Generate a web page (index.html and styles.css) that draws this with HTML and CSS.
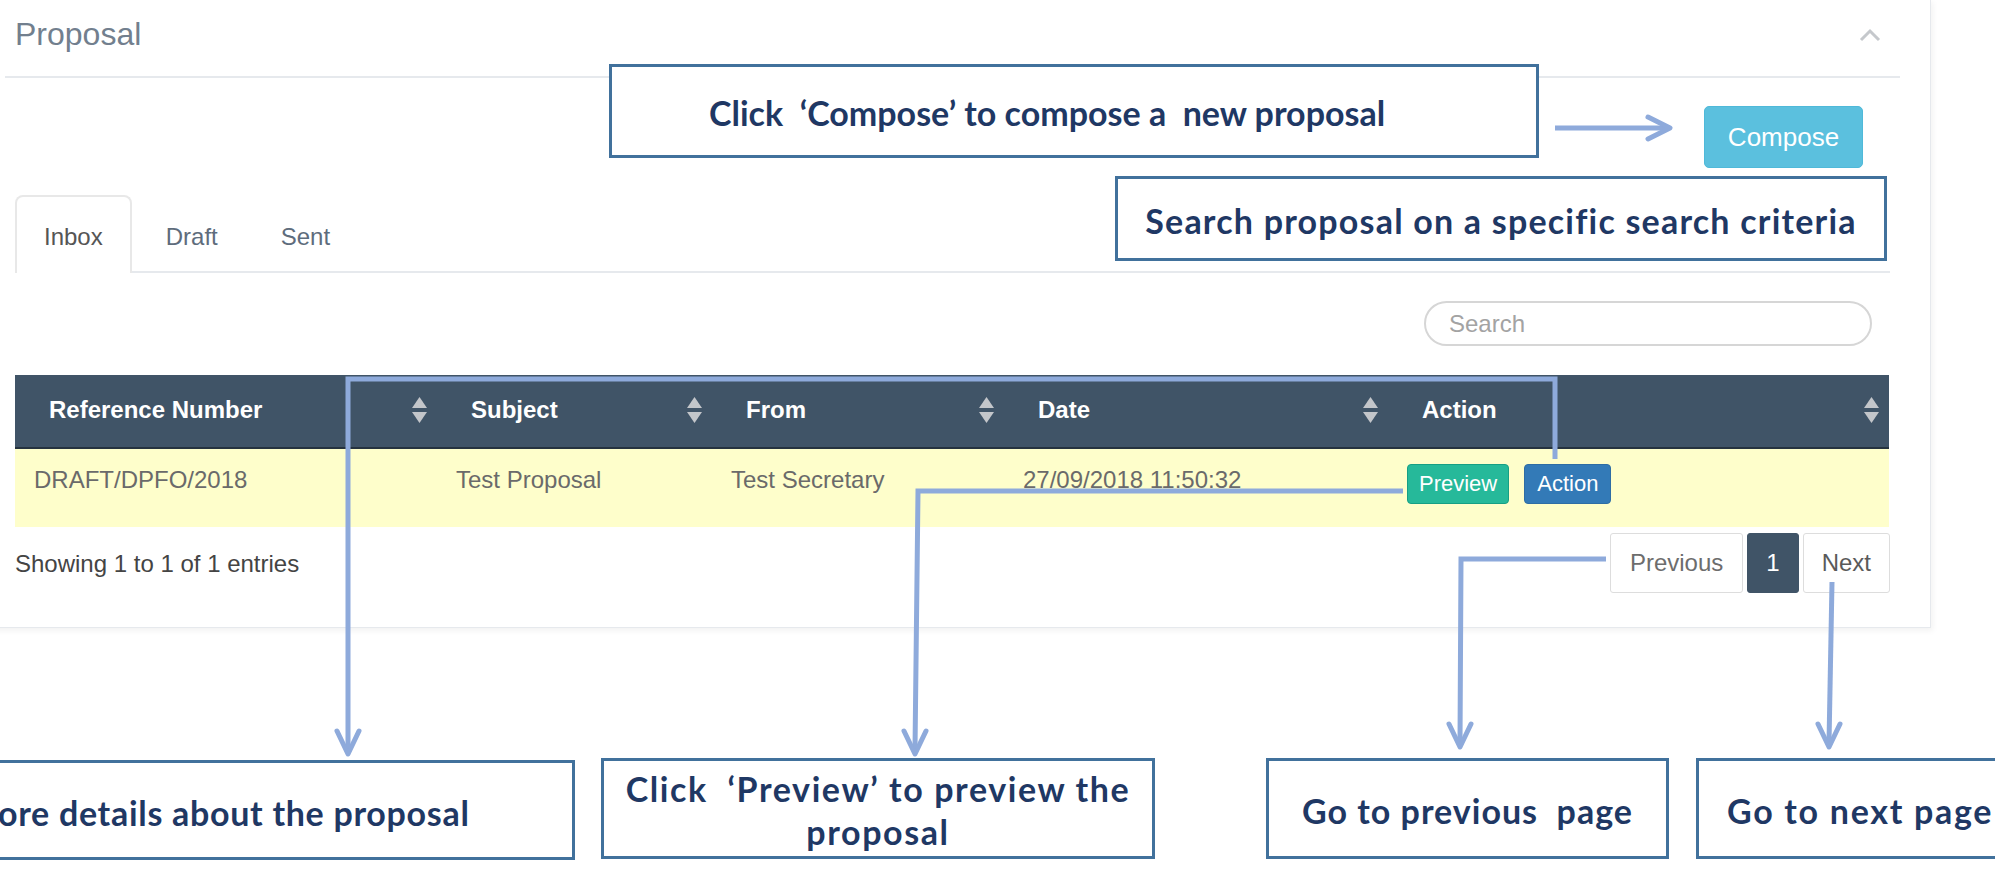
FILE: index.html
```html
<!DOCTYPE html>
<html lang="en">
<head>
<meta charset="utf-8">
<title>Proposal</title>
<link rel="stylesheet" href="styles.css">
</head>
<body>
<div class="page">
  <section class="x-panel">
    <header class="x-title">
      <h2>Proposal</h2>
      <svg class="collapse-icon" width="22" height="14" viewBox="0 0 22 14"><polyline points="2,12 11,3 20,12" fill="none" stroke="#c5c8cc" stroke-width="3"/></svg>
    </header>
    <div class="x-content">
      <div class="compose-row"><button class="btn-compose">Compose</button></div>
      <ul class="nav-tabs">
        <li class="tab active">Inbox</li>
        <li class="tab">Draft</li>
        <li class="tab">Sent</li>
      </ul>
      <div class="search-row"><input class="search" type="text" placeholder="Search"></div>
      <table class="data-table">
        <colgroup>
          <col class="c1"><col class="c2"><col class="c3"><col class="c4"><col class="c5">
        </colgroup>
        <thead>
          <tr>
            <th><div class="th-inner"><span>Reference Number</span><svg class="sort" width="15" height="26" viewBox="0 0 15 26"><polygon points="0,11 7.5,0 15,11" fill="#c3c6ca"/><polygon points="0,15 7.5,26 15,15" fill="#c3c6ca"/></svg></div></th>
            <th><div class="th-inner"><span>Subject</span><svg class="sort" width="15" height="26" viewBox="0 0 15 26"><polygon points="0,11 7.5,0 15,11" fill="#c3c6ca"/><polygon points="0,15 7.5,26 15,15" fill="#c3c6ca"/></svg></div></th>
            <th><div class="th-inner"><span>From</span><svg class="sort" width="15" height="26" viewBox="0 0 15 26"><polygon points="0,11 7.5,0 15,11" fill="#c3c6ca"/><polygon points="0,15 7.5,26 15,15" fill="#c3c6ca"/></svg></div></th>
            <th><div class="th-inner"><span>Date</span><svg class="sort" width="15" height="26" viewBox="0 0 15 26"><polygon points="0,11 7.5,0 15,11" fill="#c3c6ca"/><polygon points="0,15 7.5,26 15,15" fill="#c3c6ca"/></svg></div></th>
            <th><div class="th-inner"><span>Action</span><svg class="sort" width="15" height="26" viewBox="0 0 15 26"><polygon points="0,11 7.5,0 15,11" fill="#c3c6ca"/><polygon points="0,15 7.5,26 15,15" fill="#c3c6ca"/></svg></div></th>
          </tr>
        </thead>
        <tbody>
          <tr>
            <td>DRAFT/DPFO/2018</td>
            <td>Test Proposal</td>
            <td>Test Secretary</td>
            <td>27/09/2018 11:50:32</td>
            <td><div class="actions"><button class="btn btn-preview">Preview</button><button class="btn btn-action">Action</button></div></td>
          </tr>
        </tbody>
      </table>
      <div class="table-footer">
        <div class="info">Showing 1 to 1 of 1 entries</div>
        <ul class="pagination">
          <li class="page-item prev">Previous</li>
          <li class="page-item current">1</li>
          <li class="page-item next">Next</li>
        </ul>
      </div>
    </div>
  </section>

  <svg class="connectors" width="1995" height="870" viewBox="0 0 1995 870">
    <g fill="none" stroke="#8eaadb" stroke-width="5" stroke-linejoin="miter">
      <path d="M348 750 L348 379 L1555 379 L1555 459"/>
      <path d="M1403 491 L918 491 L915 750"/>
      <path d="M1606 559 L1461 559 L1460 743"/>
      <path d="M1832 582 L1829 743"/>
      <path d="M1555 128 L1666 128"/>
    </g>
    <g fill="none" stroke="#8eaadb" stroke-width="5" stroke-linejoin="round" stroke-linecap="round">
      <path d="M337 731 L348 754 L359 731"/>
      <path d="M904 731 L915 754 L926 731"/>
      <path d="M1449 724 L1460 747 L1471 724"/>
      <path d="M1818 724 L1829 747 L1840 724"/>
      <path d="M1648 117 L1670 128 L1648 139"/>
    </g>
  </svg>

  <div class="note note-compose">Click  ‘Compose’ to compose a  new proposal</div>
  <div class="note note-search">Search proposal on a specific search criteria</div>
  <div class="note note-details">ore details about the proposal</div>
  <div class="note note-preview">Click  ‘Preview’ to preview the
proposal</div>
  <div class="note note-prev">Go to previous  page</div>
  <div class="note note-next">Go to next page</div>
</div>
</body>
</html>
```

FILE: styles.css
```css
* { box-sizing: border-box; }
html, body { margin: 0; padding: 0; background: #ffffff; }
body { font-family: "Liberation Sans", Arial, sans-serif; }

.page {
  position: relative;
  width: 1995px;
  height: 870px;
  overflow: hidden;
  background: #ffffff;
}

/* ---------- panel ---------- */
.x-panel {
  width: 1957px;
  margin-left: -26px;
  margin-top: -1px;
  padding: 0 30px 34px 30px;
  background: #fff;
  border: 1px solid #e6e9ed;
  box-shadow: 2px 3px 6px rgba(0, 0, 0, 0.05);
}

.x-title {
  display: flex;
  justify-content: space-between;
  align-items: flex-start;
  border-bottom: 2px solid #e6e9ed;
  padding: 14px 0 22px 10px;
}
.x-title h2 {
  margin: 0;
  font-size: 32px;
  line-height: 40px;
  font-weight: 400;
  color: #727f8e;
}
.collapse-icon { margin-top: 14px; margin-right: 19px; }

.x-content { padding: 0 10px; }

.compose-row {
  display: flex;
  justify-content: flex-end;
  margin-top: 28px;
}
.btn-compose {
  width: 159px;
  height: 62px;
  margin-right: 27px;
  background: #5bc0de;
  border: 1px solid #4fb9d9;
  border-radius: 5px;
  color: #fff;
  font-family: "Liberation Sans", Arial, sans-serif;
  font-size: 26px;
  padding: 0;
}

/* ---------- tabs ---------- */
.nav-tabs {
  display: flex;
  list-style: none;
  margin: 27px 0 0 0;
  padding: 0;
  border-bottom: 2px solid #e6e9ed;
}
.tab {
  font-size: 24px;
  line-height: 34px;
  padding: 23px 27px 17px;
  border: 2px solid transparent;
  border-bottom: 0;
  margin-left: 5px;
  color: #5e6c7c;
}
.tab.active {
  margin-left: 0;
  margin-bottom: -2px;
  padding-bottom: 19px;
  background: #fff;
  border-color: #e8e8e8;
  border-radius: 8px 8px 0 0;
  color: #555;
}

/* ---------- search ---------- */
.search-row {
  display: flex;
  justify-content: flex-end;
  margin-top: 28px;
}
.search {
  width: 448px;
  height: 45px;
  margin-right: 18px;
  border: 2px solid #d6d6d6;
  border-radius: 23px;
  padding: 0 0 0 23px;
  font-family: "Liberation Sans", Arial, sans-serif;
  font-size: 24px;
  color: #555;
  outline: none;
}
.search::placeholder { color: #a3a3a3; }

/* ---------- table ---------- */
.data-table {
  width: 1874px;
  margin-top: 29px;
  border-collapse: collapse;
  table-layout: fixed;
}
.c1 { width: 422px; }
.c2 { width: 275px; }
.c3 { width: 292px; }
.c4 { width: 384px; }
.c5 { width: 501px; }

.data-table th {
  background: #405467;
  color: #fff;
  font-size: 24px;
  line-height: 34px;
  font-weight: 700;
  text-align: left;
  padding: 18px 10px 20px 34px;
  border-bottom: 2px solid #26333f;
}
.th-inner {
  display: flex;
  align-items: center;
  justify-content: space-between;
}
.sort { flex: none; }

.data-table td {
  background: #fefecb;
  color: #6a6a6a;
  font-size: 24px;
  line-height: 34px;
  vertical-align: top;
  padding: 14px 10px 23px 19px;
  white-space: nowrap;
}
.actions { display: flex; gap: 15px; margin-top: 1px; }
.btn {
  height: 40px;
  padding: 0 11px;
  border-radius: 4px;
  color: #fff;
  font-family: "Liberation Sans", Arial, sans-serif;
  font-size: 22px;
  line-height: 38px;
}
.btn-preview { background: #26b99a; border: 1px solid #169f85; }
.btn-action { background: #337ab7; border: 1px solid #2e6da4; padding: 0 12px; }

/* ---------- footer ---------- */
.table-footer {
  display: flex;
  justify-content: space-between;
  align-items: flex-start;
}
.info {
  margin-top: 20px;
  font-size: 24px;
  line-height: 34px;
  color: #444;
}
.pagination {
  display: flex;
  gap: 4px;
  list-style: none;
  margin: 6px 0 0 0;
  padding: 0;
}
.page-item {
  font-size: 24px;
  line-height: 34px;
  padding: 12px 18px 12px;
  border: 1px solid #dddddd;
  border-radius: 3px;
  color: #6d6d6d;
  background: #fff;
}
.page-item.prev { padding: 12px 19px; }
.page-item.current {
  background: #405467;
  border-color: #405467;
  color: #fff;
}
.page-item.next { color: #5a5a5a; }

/* ---------- annotations (overlay) ---------- */
.connectors {
  position: absolute;
  left: 0;
  top: 0;
  pointer-events: none;
}
.note {
  position: absolute;
  display: flex;
  align-items: center;
  justify-content: center;
  text-align: center;
  background: #fff;
  border: 3px solid #41719c;
  color: #1f3864;
  font-family: Lato, "Open Sans", sans-serif;
  font-weight: 700;
  font-size: 34px;
  line-height: 43px;
  white-space: pre;
}
.note-compose {
  left: 609px; top: 64px; width: 930px; height: 94px;
  justify-content: flex-start;
  padding: 2px 0 0 97px;
}
.note-search {
  left: 1115px; top: 176px; width: 772px; height: 85px;
  padding-top: 4px;
  letter-spacing: 1.2px;
}
.note-details {
  left: -20px; top: 760px; width: 595px; height: 100px;
  justify-content: flex-start;
  padding: 4px 0 0 15px;
  letter-spacing: 0.7px;
}
.note-preview {
  left: 601px; top: 758px; width: 554px; height: 101px;
  padding-top: 2px;
  letter-spacing: 1.6px;
}
.note-prev {
  left: 1266px; top: 758px; width: 403px; height: 101px;
  padding-top: 4px;
  letter-spacing: 1px;
}
.note-next {
  left: 1696px; top: 758px; width: 400px; height: 101px;
  justify-content: flex-start;
  padding: 4px 0 0 28px;
  letter-spacing: 1.7px;
}
```
